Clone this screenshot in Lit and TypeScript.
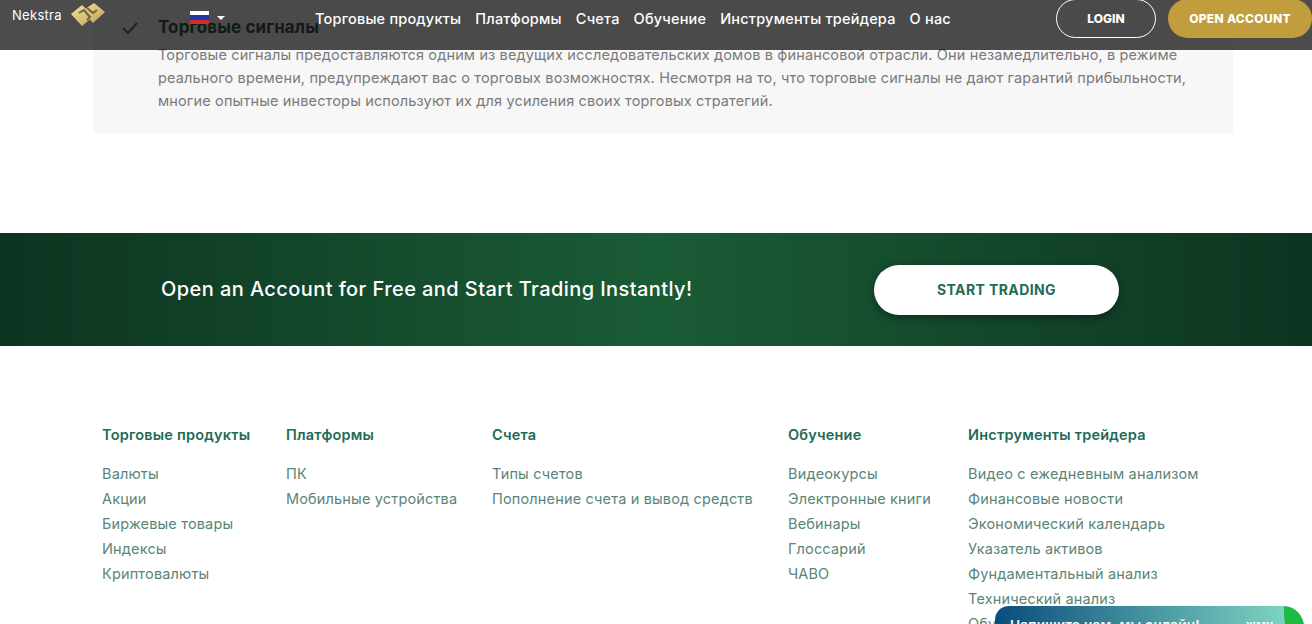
import { LitElement, css, html, svg } from 'lit';
import { customElement } from 'lit/decorators.js';

const navItems = ['Торговые продукты', 'Платформы', 'Счета', 'Обучение', 'Инструменты трейдера', 'О нас'];

const footerCols = [
  { title: 'Торговые продукты', width: 184, links: ['Валюты', 'Акции', 'Биржевые товары', 'Индексы', 'Криптовалюты'] },
  { title: 'Платформы', width: 206, links: ['ПК', 'Мобильные устройства'] },
  { title: 'Счета', width: 296, links: ['Типы счетов', 'Пополнение счета и вывод средств'] },
  { title: 'Обучение', width: 180, links: ['Видеокурсы', 'Электронные книги', 'Вебинары', 'Глоссарий', 'ЧАВО'] },
  {
    title: 'Инструменты трейдера',
    width: 260,
    links: ['Видео с ежедневным анализом', 'Финансовые новости', 'Экономический календарь', 'Указатель активов', 'Фундаментальный анализ', 'Технический анализ', 'Обучающие материалы'],
  },
];

// two overlapping gold diamonds with a dark zig-zag through them
const logoMark = svg`
  <svg class="logo-mark" viewBox="0 0 36 26">
    <defs>
      <linearGradient id="gold" x1="0" y1="0" x2="1" y2="1">
        <stop offset="0" stop-color="#f0e3a6" />
        <stop offset="0.55" stop-color="#d8bf72" />
        <stop offset="1" stop-color="#b3954a" />
      </linearGradient>
    </defs>
    <path fill="url(#gold)" d="M1 12 12 3 24 14 12 24ZM12 9 24 1 35 10 23 21Z" />
    <path fill="none" stroke="#6e6242" stroke-width="2" d="M9 11 14 8 20 15 17 18M17 6 23 11 27 8" />
  </svg>
`;

@customElement('app-root')
export class AppRoot extends LitElement {
  static styles = css`
    :host {
      display: block;
      height: 624px;
      overflow: hidden;
      position: relative;
      background: #fff;
      font-family: 'Inter', 'Noto Sans', sans-serif;
    }

    .topbar {
      position: absolute;
      top: 0;
      left: 0;
      right: 0;
      height: 50px;
      z-index: 5;
      display: flex;
      align-items: flex-start;
      background: rgba(20, 20, 20, 0.76);
      color: #fff;
    }
    .logo {
      display: flex;
      align-items: center;
      margin: 2px 0 0 12px;
      width: 178px;
      font-size: 13px;
      letter-spacing: 0.3px;
    }
    .logo-mark {
      width: 36px;
      height: 26px;
      margin-left: 8px;
    }
    .lang {
      display: flex;
      align-items: center;
      gap: 8px;
      margin-top: 11px;
      width: 125px;
    }
    .flag {
      width: 19px;
      height: 13px;
      background: linear-gradient(#fff 0 33%, #2438a8 33% 66%, #d52b2b 66%);
    }
    .caret {
      border: 4px solid transparent;
      border-top-color: #fff;
      border-bottom-width: 0;
    }
    .nav {
      display: flex;
      gap: 14px;
      margin-top: 10px;
      font-size: 14.5px;
      line-height: 18px;
      font-weight: 500;
      letter-spacing: 0.2px;
      white-space: nowrap;
    }
    .actions {
      margin-left: auto;
      display: flex;
      gap: 12px;
      margin-top: -1px;
    }
    .btn {
      height: 39px;
      border-radius: 20px;
      box-sizing: border-box;
      display: flex;
      align-items: center;
      justify-content: center;
      font-size: 12px;
      font-weight: 800;
    }
    .login {
      width: 100px;
      border: 1px solid #fff;
    }
    .open {
      width: 144px;
      background: #c19d3e;
      letter-spacing: 0.3px;
    }

    .panel {
      margin: 0 79px 0 93px;
      height: 133px;
      box-sizing: border-box;
      padding: 17px 40px 0 29px;
      background: #f7f7f7;
      display: flex;
    }
    .check {
      width: 16px;
      height: 12px;
      margin: 5px 20px 0 0;
      flex: none;
    }
    .panel h3 {
      margin: 0 0 6px;
      font-size: 17px;
      line-height: 20px;
      font-weight: 700;
      letter-spacing: 0.1px;
      color: #0c2f24;
    }
    .panel p {
      margin: 0;
      font-size: 14.5px;
      line-height: 23px;
      letter-spacing: 0.14px;
      color: #7a7a7a;
    }

    .cta {
      margin-top: 100px;
      height: 113px;
      display: flex;
      align-items: center;
      padding-left: 161px;
      background: linear-gradient(90deg, #0d3421 0%, #1a5c36 50%, #0d3421 100%);
    }
    .cta-text {
      width: 713px;
      margin-top: -2px;
      color: #fff;
      font-size: 20px;
      font-weight: 500;
      letter-spacing: 0.42px;
    }
    .cta-btn {
      width: 245px;
      height: 50px;
      border-radius: 25px;
      background: #fff;
      box-shadow: 0 3px 8px rgba(0, 0, 0, 0.4);
      display: flex;
      align-items: center;
      justify-content: center;
      color: #1f6b55;
      font-size: 14px;
      font-weight: 700;
      letter-spacing: 0.4px;
    }

    .footer {
      display: flex;
      padding: 79px 0 0 102px;
    }
    .col h4 {
      margin: 0 0 16px;
      font-size: 14.5px;
      line-height: 20px;
      font-weight: 600;
      letter-spacing: 0.2px;
      color: #1f6b55;
    }
    .col a {
      display: block;
      font-size: 14.5px;
      line-height: 25px;
      letter-spacing: 0.16px;
      color: #5a8578;
      white-space: nowrap;
    }

    .chat {
      position: absolute;
      left: 995px;
      top: 606px;
      width: 309px;
      height: 60px;
      border-radius: 14px 21px 0 0;
      background: linear-gradient(90deg, #0a4d7c 0%, #85dcc6 100%);
      color: #fff;
      font-size: 13.5px;
      font-weight: 600;
      letter-spacing: 0.25px;
      padding: 11px 0 0 15px;
      box-sizing: border-box;
      overflow: hidden;
      z-index: 6;
      display: flex;
    }
    .chat-hint {
      margin-left: 46px;
      font-size: 12px;
    }
    .chat-dot {
      position: absolute;
      right: 0;
      top: 0;
      width: 20px;
      height: 40px;
      border-bottom-left-radius: 24px 40px;
      background: #1dbb45;
    }
  `;

  render() {
    return html`
      <div class="panel">
        <svg class="check" viewBox="0 0 16 12">
          <path d="M1 6l5 5L15 1" fill="none" stroke="#1c5c48" stroke-width="2" />
        </svg>
        <div>
          <h3>Торговые сигналы</h3>
          <p>
            Торговые сигналы предоставляются одним из ведущих исследовательских домов в финансовой отрасли. Они незамедлительно, в режиме
            реального времени, предупреждают вас о торговых возможностях. Несмотря на то, что торговые сигналы не дают гарантий прибыльности,
            многие опытные инвесторы используют их для усиления своих торговых стратегий.
          </p>
        </div>
      </div>

      <section class="cta">
        <div class="cta-text">Open an Account for Free and Start Trading Instantly!</div>
        <div class="cta-btn">START TRADING</div>
      </section>

      <footer class="footer">
        ${footerCols.map(
          (col) => html`
            <div class="col" style="width: ${col.width}px">
              <h4>${col.title}</h4>
              ${col.links.map((link) => html`<a>${link}</a>`)}
            </div>
          `
        )}
      </footer>

      <header class="topbar">
        <div class="logo">Nekstra ${logoMark}</div>
        <div class="lang"><span class="flag"></span><span class="caret"></span></div>
        <nav class="nav">${navItems.map((item) => html`<span>${item}</span>`)}</nav>
        <div class="actions">
          <div class="btn login">LOGIN</div>
          <div class="btn open">OPEN ACCOUNT</div>
        </div>
      </header>

      <div class="chat">
        <span>Напишите нам, мы онлайн!</span>
        <span class="chat-hint">жми</span>
        <span class="chat-dot"></span>
      </div>
    `;
  }
}
